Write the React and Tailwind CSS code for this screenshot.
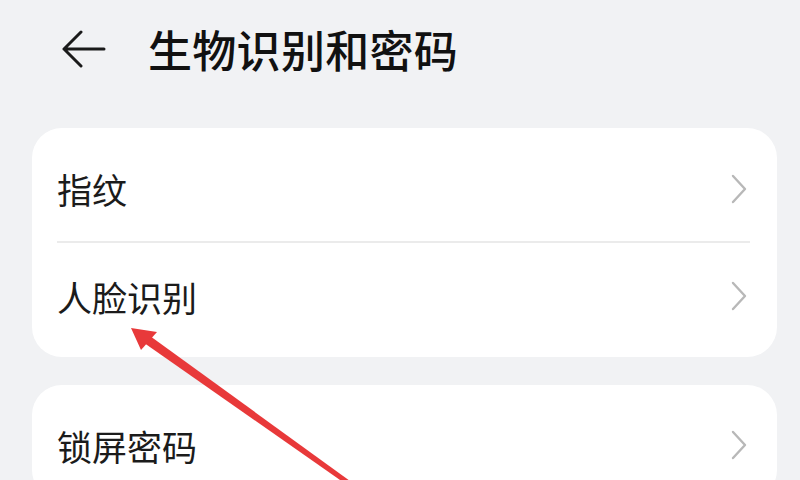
import { useState } from 'react';

const font = { fontFamily: '"Noto Sans CJK SC", "Noto Sans", sans-serif' };

function Chevron() {
    return (
        <svg width="18" height="30" viewBox="0 0 18 30" fill="none" className="shrink-0">
            <path d="M3 2 L15 15 L3 28" stroke="#b8b8b8" strokeWidth="2.4" strokeLinecap="round" strokeLinejoin="round" />
        </svg>
    );
}

function Row({ label, divider, pad }) {
    return (
        <div className={`relative flex items-center justify-between pl-[25px] pr-[29px] ${pad}`}>
            <span className="text-[35px] text-[#1b1b1b] leading-none">{label}</span>
            <Chevron />
            {divider && <div className="absolute bottom-0 left-[25px] right-[27px] h-[2px] bg-[#ebebeb]" />}
        </div>
    );
}

export default function App() {
    const [items] = useState([
        [
            { label: '指纹', divider: true, pad: 'h-[115px] pt-[6px]' },
            { label: '人脸识别', pad: 'h-[114px] pb-[8px]' },
        ],
        [{ label: '锁屏密码', pad: 'h-[115px] pt-[5px]' }],
    ]);

    return (
        <div className="relative w-[800px] h-[480px] overflow-hidden bg-[#f1f2f4]" style={font}>
            {/* Header */}
            <header className="flex items-center h-[100px] pl-[62px] pb-[2px]">
                <svg width="44" height="38" viewBox="0 0 44 38" fill="none">
                    <path d="M2 19 H42 M19 2 L2 19 L19 36" stroke="#1a1a1a" strokeWidth="3" strokeLinecap="round" strokeLinejoin="round" />
                </svg>
                <h1 className="ml-[42px] text-[44px] font-medium text-[#111] leading-none tracking-[0.3px]">生物识别和密码</h1>
            </header>

            <main className="flex flex-col gap-[28px] pl-[32px] pr-[23px] pt-[28px]">
                {items.map((group, i) => (
                    <div key={i} className="bg-white rounded-[30px]">
                        {group.map((it) => (
                            <Row key={it.label} {...it} />
                        ))}
                    </div>
                ))}
            </main>

            {/* Annotation arrow */}
            <svg className="absolute inset-0 pointer-events-none" width="800" height="480" viewBox="0 0 800 480">
                <polygon points="142.4,341.7 147.6,334.3 351.4,482 348.6,486" fill="#e8393a" />
                <polygon points="131,328 157,332 141,350" fill="#e8393a" />
            </svg>
        </div>
    );
}
